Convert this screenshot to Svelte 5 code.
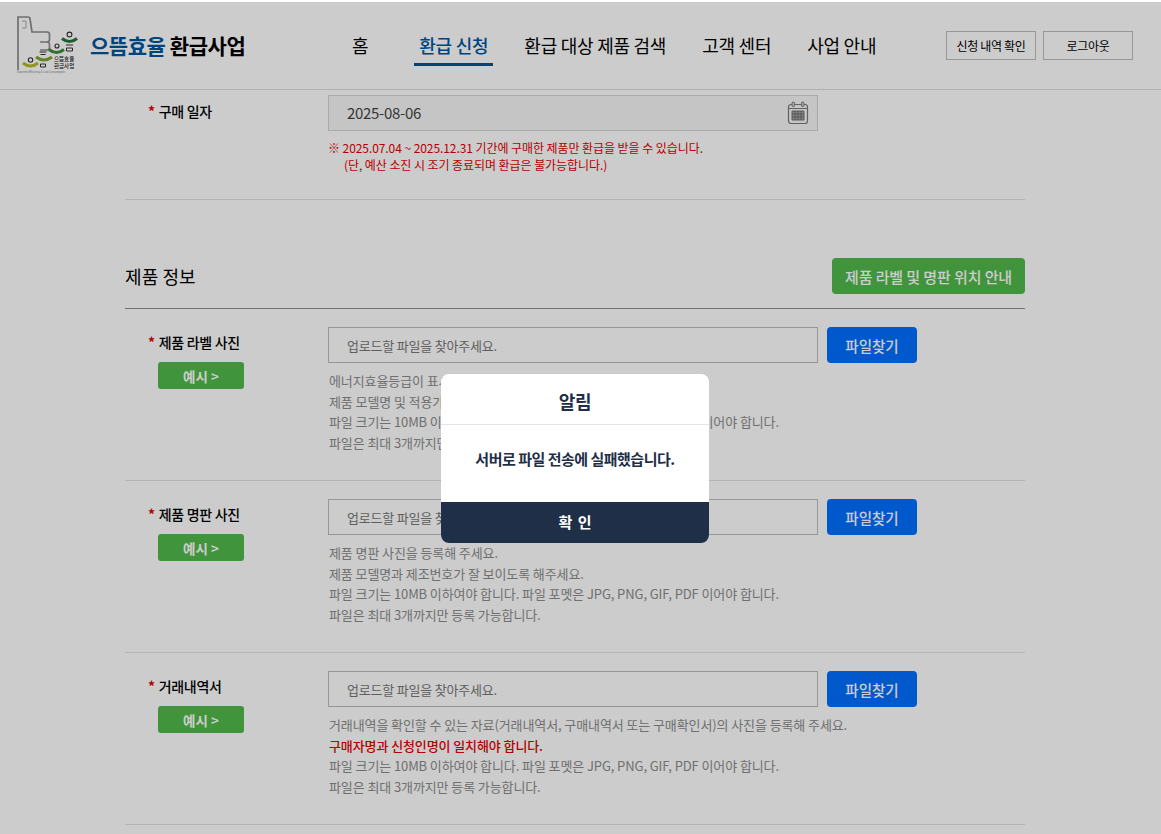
<script lang="ts">
	const navItems = ['홈', '환급 신청', '환급 대상 제품 검색', '고객 센터', '사업 안내'];

	const commonLines = [
		'파일 크기는 10MB 이하여야 합니다. 파일 포멧은 JPG, PNG, GIF, PDF 이어야 합니다.',
		'파일은 최대 3개까지만 등록 가능합니다.'
	];

	const uploads = [
		{
			label: '제품 라벨 사진',
			lines: ['에너지효율등급이 표시된 제품 라벨 사진을 등록해 주세요.', '제품 모델명 및 적용가능 등급이 잘 보이도록 해주세요.'],
			red: false
		},
		{
			label: '제품 명판 사진',
			lines: ['제품 명판 사진을 등록해 주세요.', '제품 모델명과 제조번호가 잘 보이도록 해주세요.'],
			red: false
		},
		{
			label: '거래내역서',
			lines: ['거래내역을 확인할 수 있는 자료(거래내역서, 구매내역서 또는 구매확인서)의 사진을 등록해 주세요.', '구매자명과 신청인명이 일치해야 합니다.'],
			red: true
		}
	];
</script>

<div class="page">
	<header class="header">
		<div class="logo">
			<svg class="logo-mark" width="64" height="58" viewBox="0 0 64 58" aria-hidden="true">
				<path d="M2 54V1h10q2 0 2 2l2 13h15q2.500 0 2.500 2.500v5q0 2.500-2.500 2.500h-7M31 26q2.500 0 2.500 2.500v3q0 2.500-2.500 2.500h-7" fill="none" stroke="#8c8c8c" stroke-width="1.700" />
				<path d="M6 5h4v7H6" fill="none" stroke="#a8a8a8" stroke-width="1" />
				<path d="M7 47q7.500 6 15 0" fill="none" stroke="#b4bc2a" stroke-width="3" />
				<path d="M20 41q8 6 16 0" fill="none" stroke="#7fa82e" stroke-width="3" />
				<path d="M33 33.500q7.500 6 15 0" fill="none" stroke="#3f8f3a" stroke-width="3" />
				<path d="M46 22.500q7.500 6 15 0" fill="none" stroke="#23763a" stroke-width="3" />
				<circle cx="14.500" cy="44" r="2.200" fill="none" stroke="#333" stroke-width="1.100" />
				<circle cx="41" cy="30" r="2" fill="none" stroke="#333" stroke-width="1.100" />
				<circle cx="53.500" cy="18.500" r="2.400" fill="none" stroke="#333" stroke-width="1.100" />
				<path d="M23.500 36h7M24.500 38.500h5M24.500 48h5v3h-5zM50 29h7M50.500 32h6v3h-6z" fill="none" stroke="#333" stroke-width="1" />
				<text x="38" y="44.500" class="mark-text">으뜸효율</text>
				<text x="38" y="51.500" class="mark-text">환급사업</text>
				<text x="1" y="57" class="mark-sub">Supreme Efficiency &amp; Low Consumption</text>
			</svg>
			<div class="logo-text"><span class="logo-accent">으뜸효율</span> 환급사업</div>
		</div>

		<nav class="nav">
			{#each navItems as item, i}
				<span class="nav-item" class:active={i === 1}>{item}</span>
			{/each}
		</nav>

		<div class="header-actions">
			<button class="outline-btn">신청 내역 확인</button>
			<button class="outline-btn">로그아웃</button>
		</div>
	</header>

	<main class="content">
		<section class="date-row">
			<div class="row-label"><span class="star">*</span> 구매 일자</div>
			<div class="row-body">
				<div class="date-input">
					<span class="date-value">2025-08-06</span>
					<svg width="22" height="24" viewBox="0 0 22 24" aria-hidden="true">
						<rect x="1.500" y="3.500" width="19" height="19" rx="2.500" fill="none" stroke="#7b7b7b" stroke-width="1.200" />
						<path d="M1.500 7.500h19" stroke="#7b7b7b" />
						<rect x="5" y="1" width="2.600" height="4.600" rx="1.300" fill="#ccc" stroke="#7b7b7b" />
						<rect x="14.400" y="1" width="2.600" height="4.600" rx="1.300" fill="#ccc" stroke="#7b7b7b" />
						<path d="M5 10h12v9H5zM5 13h12M5 16h12M8 10v9M11 10v9M14 10v9" fill="#aaa" stroke="#666" stroke-width="0.900" />
					</svg>
				</div>
				<p class="notice">※ 2025.07.04 ~ 2025.12.31 기간에 구매한 제품만 환급을 받을 수 있습니다.</p>
				<p class="notice indent">(단, 예산 소진 시 조기 종료되며 환급은 불가능합니다.)</p>
			</div>
		</section>

		<div class="section-head">
			<h2>제품 정보</h2>
			<button class="guide-btn">제품 라벨 및 명판 위치 안내</button>
		</div>

		{#each uploads as row}
			<section class="upload-row">
				<div class="row-label-col">
					<div class="row-label"><span class="star">*</span> {row.label}</div>
					<button class="example-btn">예시 &gt;</button>
				</div>
				<div class="row-body">
					<div class="file-line">
						<div class="file-input">업로드할 파일을 찾아주세요.</div>
						<button class="file-btn">파일찾기</button>
					</div>
					<ul class="help">
						<li>{row.lines[0]}</li>
						<li class:warn={row.red}>{row.lines[1]}</li>
						{#each commonLines as line}
							<li>{line}</li>
						{/each}
					</ul>
				</div>
			</section>
		{/each}
	</main>

	<div class="overlay"></div>

	<div class="modal" role="dialog">
		<div class="modal-title">알림</div>
		<div class="modal-body">서버로 파일 전송에 실패했습니다.</div>
		<button class="modal-ok">확 인</button>
	</div>
</div>

<style>
	:global(body) {
		background: #fff;
		overflow: hidden;
	}

	.page {
		position: relative;
		height: 834px;
		overflow: hidden;
		padding-top: 2px;
		box-sizing: border-box;
		font-family: 'Noto Sans CJK KR', 'Noto Sans', sans-serif;
		color: #000;
	}

	button {
		font-family: inherit;
		cursor: pointer;
	}

	p,
	ul,
	h2 {
		margin: 0;
		padding: 0;
	}

	.header {
		display: flex;
		align-items: center;
		height: 87px;
		border-bottom: 1px solid #dcdcdc;
		padding-left: 16px;
	}

	.logo {
		display: flex;
		align-items: center;
		gap: 10px;
		width: 323px;
		margin-top: -1px;
	}

	.mark-text {
		font-size: 5.5px;
		fill: #222;
		font-weight: 500;
	}

	.mark-sub {
		font-size: 2.7px;
		fill: #888;
		font-family: 'Liberation Sans', sans-serif;
	}

	.logo-text {
		font-size: 21px;
		font-weight: 700;
		letter-spacing: -0.45px;
		white-space: nowrap;
	}

	.logo-accent {
		color: #00559f;
	}

	.nav {
		display: flex;
		width: 607px;
		align-items: center;
	}

	.nav-item {
		font-size: 18px;
		line-height: 26px;
		letter-spacing: -0.25px;
		padding: 0 5px 5px;
		margin-right: 26px;
		margin-top: 6px;
		white-space: nowrap;
		border-bottom: 3px solid transparent;
	}

	.nav-item:first-child {
		margin-right: 41px;
		margin-left: 8px;
	}

	.nav-item.active {
		color: #00559f;
		border-bottom-color: #00559f;
		font-weight: 500;
	}

	.header-actions {
		display: flex;
		gap: 7px;
	}

	.outline-btn {
		width: 90px;
		height: 29px;
		background: #fff;
		border: 1px solid #bdbdbd;
		font-size: 12px;
		letter-spacing: -0.35px;
		padding: 0;
		color: #000;
	}

	.content {
		width: 900px;
		margin-left: 125px;
	}

	.date-row {
		display: flex;
		height: 104px;
		padding-top: 5px;
		border-bottom: 1px solid #e2e2e2;
	}

	.row-label {
		font-size: 14px;
		font-weight: 500;
		line-height: 24px;
		padding-left: 23px;
		letter-spacing: -0.3px;
	}

	.date-row .row-label {
		width: 180px;
		flex: none;
		margin-top: 4px;
	}

	.star {
		color: #e00000;
		font-weight: 700;
		margin-right: 1px;
	}

	.date-input {
		display: flex;
		align-items: center;
		justify-content: space-between;
		width: 490px;
		height: 36px;
		box-sizing: border-box;
		border: 1px solid #d5d5d5;
		background: #f7f7f7;
		padding: 0 8px 0 18px;
		font-size: 15px;
		letter-spacing: -0.3px;
		color: #444;
	}

	.date-value {
		margin-top: -2px;
	}

	.notice {
		font-size: 12px;
		line-height: 17px;
		color: #e60000;
		letter-spacing: -0.07px;
	}

	.date-input + .notice {
		margin-top: 8px;
	}

	.indent {
		padding-left: 16px;
	}

	.section-head {
		display: flex;
		align-items: center;
		justify-content: space-between;
		height: 109px;
		padding-top: 44px;
		box-sizing: border-box;
		border-bottom: 1px solid #8f8f8f;
	}

	.section-head h2 {
		font-size: 18px;
		font-weight: 400;
		line-height: 26px;
		letter-spacing: 0.1px;
	}

	.guide-btn {
		width: 193px;
		height: 36px;
		border: none;
		border-radius: 4px;
		background: #50ba4a;
		color: #fff;
		font-size: 15px;
		font-weight: 500;
		letter-spacing: -0.1px;
		padding: 0;
	}

	.upload-row {
		display: flex;
		height: 172px;
		box-sizing: border-box;
		padding-top: 18px;
		border-bottom: 1px solid #e2e2e2;
	}

	.row-label-col {
		width: 203px;
		flex: none;
	}

	.upload-row .row-label {
		margin-top: 3px;
	}

	.example-btn {
		display: block;
		width: 86px;
		height: 27px;
		margin: 8px 0 0 33px;
		border: none;
		border-radius: 3px;
		background: #50ba4a;
		color: #fff;
		font-size: 13.5px;
		font-weight: 700;
		padding: 0;
	}

	.file-line {
		display: flex;
		gap: 9px;
	}

	.file-input {
		width: 490px;
		height: 36px;
		box-sizing: border-box;
		border: 1px solid #bdbdbd;
		background: #fff;
		padding-left: 18px;
		font-size: 13px;
		letter-spacing: -0.2px;
		line-height: 36px;
		color: #777;
	}

	.file-btn {
		width: 90px;
		height: 36px;
		border: none;
		border-radius: 4px;
		background: #0070ff;
		color: #fff;
		font-size: 14.5px;
		font-weight: 500;
		padding: 0;
	}

	.help {
		list-style: none;
		margin: 8px 0 0 1px;
		font-size: 13px;
		letter-spacing: -0.1px;
		line-height: 20.7px;
		color: #8c8c8c;
		white-space: nowrap;
	}

	.help .warn {
		color: #e60000;
		font-weight: 500;
	}

	.overlay {
		position: absolute;
		inset: 2px 0 0;
		background: rgba(0, 0, 0, 0.2);
	}

	.modal {
		position: absolute;
		left: 441px;
		top: 374px;
		display: flex;
		flex-direction: column;
		width: 268px;
		height: 169px;
		border-radius: 8px;
		overflow: hidden;
		background: #fff;
		color: #1e2f47;
	}

	.modal-title {
		padding-top: 4px;
		height: 46px;
		border-bottom: 1px solid #e4e4e4;
		text-align: center;
		font-size: 18px;
		font-weight: 700;
		line-height: 46px;
		letter-spacing: -0.3px;
	}

	.modal-body {
		flex: 1;
		text-align: center;
		font-size: 15px;
		font-weight: 700;
		line-height: 68px;
		letter-spacing: -0.5px;
	}

	.modal-ok {
		height: 41px;
		border: none;
		background: #1e2f47;
		color: #fff;
		font-size: 15px;
		font-weight: 700;
		word-spacing: 2px;
		padding: 0 0 2px;
	}
</style>
